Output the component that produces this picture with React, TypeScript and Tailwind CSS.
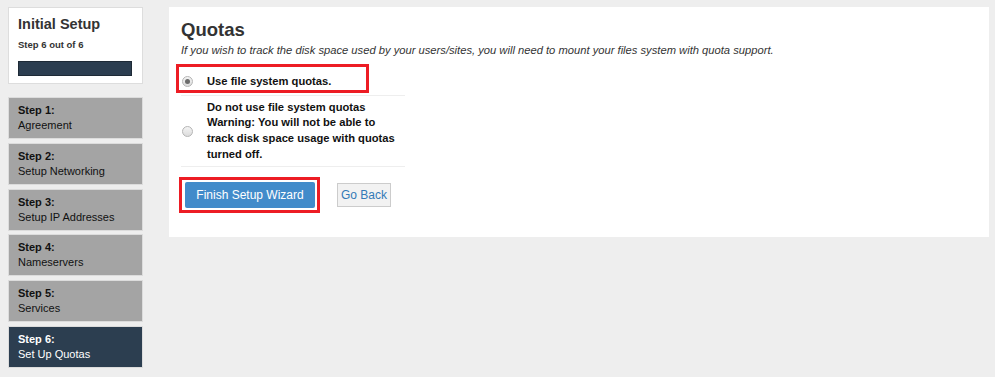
import React from "react";

const steps = [
  { n: 1, label: "Agreement" },
  { n: 2, label: "Setup Networking" },
  { n: 3, label: "Setup IP Addresses" },
  { n: 4, label: "Nameservers" },
  { n: 5, label: "Services" },
  { n: 6, label: "Set Up Quotas" },
];

const Radio = ({ checked }: { checked?: boolean }) => (
  <span className="flex h-[11px] w-[11px] shrink-0 items-center justify-center rounded-full border border-[#b5b5b5] bg-gradient-to-b from-[#f4f4f4] to-[#dcdcdc]">
    {checked && <span className="h-[5px] w-[5px] rounded-full bg-[#6b6b6b]" />}
  </span>
);

const App = () => {
  return (
    <div
      className="flex h-[377px] w-full gap-[26px] bg-[#eeeeee] pl-[8px] pr-[6px] pt-[7px] text-[#222]"
      style={{ fontFamily: '"Liberation Sans", Arial, sans-serif' }}
    >
      {/* Sidebar */}
      <aside className="flex w-[135px] shrink-0 flex-col">
        <div className="h-[77px] border border-[#dddddd] bg-white px-[9px] pt-[7px]">
          <h2 className="text-[14.5px] font-bold leading-[19px] text-[#333]">Initial Setup</h2>
          <p className="mt-[4px] text-[9.5px] font-bold leading-[14px] text-[#333]">Step 6 out of 6</p>
          <div className="mt-[9px] h-[15px] w-[114px] border border-[#1e2a36] bg-[#2c3e50]" />
        </div>

        <div className="mt-[13px] flex flex-col gap-[3.8px]">
          {steps.map((s) => (
            <div
              key={s.n}
              className={
                s.n === 6
                  ? "h-[42px] border border-[#dcdcdc] bg-[#2c3e50] px-[9px] pt-[5px] text-[11px] leading-[15px] text-white"
                  : "h-[42px] border border-[#dcdcdc] bg-[#a4a4a4] px-[9px] pt-[5px] text-[11px] leading-[15px] text-[#111]"
              }
            >
              <div className="font-bold">Step {s.n}:</div>
              <div>{s.label}</div>
            </div>
          ))}
        </div>
      </aside>

      {/* Main panel */}
      <main className="h-[230px] flex-1 bg-white pl-[12px] pt-[12px]">
        <h1 className="text-[18.5px] font-bold leading-[22px] text-[#333]">Quotas</h1>
        <p className="mt-[2px] text-[11.2px] italic leading-[14px] text-[#333]">
          If you wish to track the disk space used by your users/sites, you will need to mount your files system with quota support.
        </p>

        <div className="mt-[11px] w-[224px]">
          <div className="relative flex h-[28px] items-center border-b border-[#eeeeee]">
            <span className="flex w-[26px] items-center pl-[1px]">
              <Radio checked />
            </span>
            <span className="text-[11.2px] font-bold text-[#111]">Use file system quotas.</span>
            <span className="pointer-events-none absolute left-[-5px] top-[-4px] h-[29px] w-[193px] border-[3px] border-[#ed1c24]" />
          </div>
          <div className="flex h-[71px] items-center border-b border-[#eeeeee]">
            <span className="flex w-[26px] items-center pl-[1px]">
              <Radio />
            </span>
            <span className="text-[11.2px] font-bold leading-[15.6px] text-[#111]">
              Do not use file system quotas
              <br />
              Warning: You will not be able to
              <br />
              track disk space usage with quotas
              <br />
              turned off.
            </span>
          </div>
        </div>

        <div className="ml-[-2px] mt-[10px] flex items-center gap-[17px]">
          <span className="inline-block border-[3px] border-[#ed1c24] py-[2px] pl-[3px] pr-[2px]">
            <button className="h-[26px] w-[130px] rounded-[2px] bg-[#428bca] text-[12px] text-white">
              Finish Setup Wizard
            </button>
          </span>
          <button className="h-[24px] w-[54px] border border-[#cccccc] bg-[#f2f2f2] text-[12px] text-[#337ab7]">
            Go Back
          </button>
        </div>
      </main>
    </div>
  );
};

export default App;
